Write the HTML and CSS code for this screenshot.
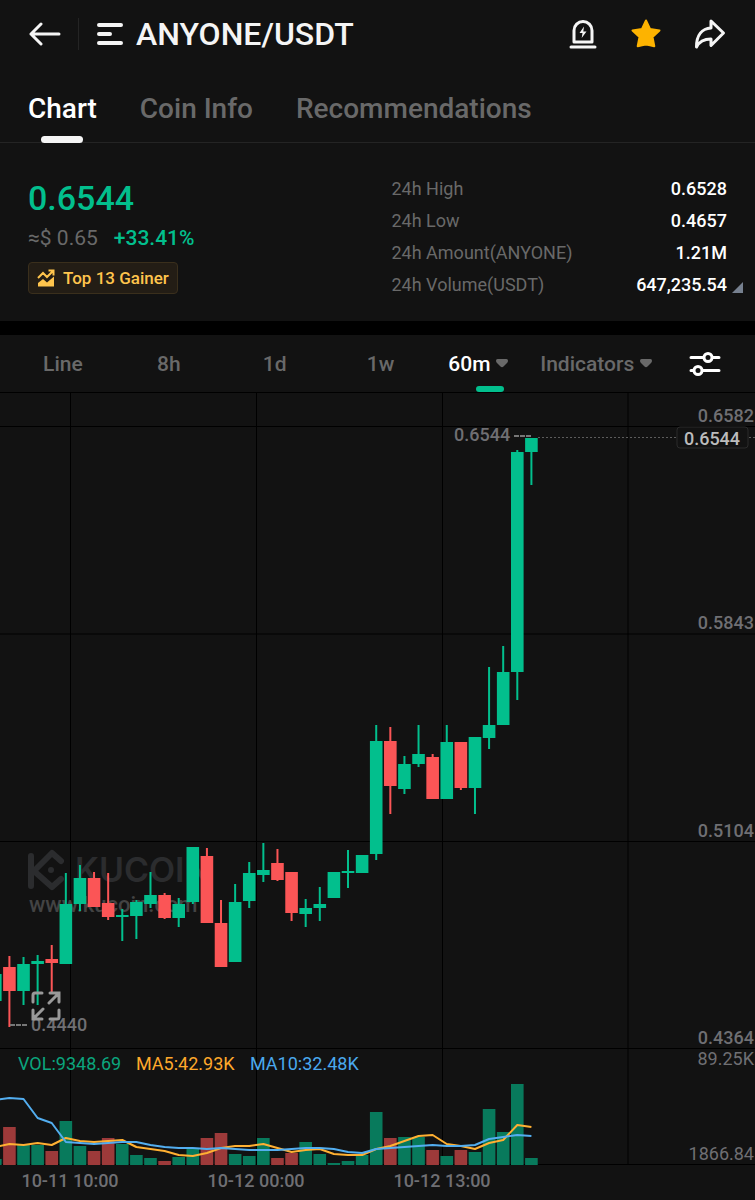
FILE: index.html
```
<!DOCTYPE html>
<html lang="en">
<head>
  <meta charset="UTF-8" />
  <meta name="viewport" content="width=device-width, initial-scale=1.0" />
  <title>ANYONE/USDT</title>
  <link rel="stylesheet" href="styles.css">
</head>
<body>
  <header class="topbar">
    <button class="icon-btn back" aria-label="Back">
      <svg width="32" height="24" viewBox="0 0 32 24"><path d="M30 12H2M12 2 2 12l10 10"/></svg>
    </button>
    <span class="divider"></span>
    <button class="pair">
      <svg width="28" height="24" viewBox="0 0 28 24"><path d="M3 3h22M3 12h11M3 21h22"/></svg>
      ANYONE/USDT
    </button>
    <div class="actions">
      <button class="icon-btn" aria-label="Price alert">
        <svg width="30" height="32" viewBox="0 0 30 32">
          <path class="line" d="M6 24V12.500a9 9 0 0 1 18 0V24zM3 29h24"/>
          <path class="solid" d="M16 8.500l-4.500 6.500h3l-.8 5 4.800-6.500h-3.200z"/>
        </svg>
      </button>
      <button class="icon-btn star" aria-label="Favourite">
        <svg width="32" height="32" viewBox="0 0 32 32"><path d="M16 2.500l4 8.500 9.500 1.400-7 6.600 1.800 9.300Q20 27 16 26.500 12 27 7.700 28.300L9.500 19l-7-6.600L12 11z"/></svg>
      </button>
      <button class="icon-btn" aria-label="Share">
        <svg width="32" height="32" viewBox="0 0 32 32"><path class="line" d="M17 3 29.500 15 17 27.500V21C10 21 5.500 23 2.500 29 2.500 17 8 10.500 17 10z"/></svg>
      </button>
    </div>
  </header>

  <nav class="tabs">
    <button class="tab active">Chart</button>
    <button class="tab">Coin Info</button>
    <button class="tab">Recommendations</button>
  </nav>

  <section class="summary">
    <div>
      <div class="price">0.6544</div>
      <div class="sub"><span>≈$ 0.65</span><span class="up">+33.41%</span></div>
      <a class="badge" href="#">
        <svg width="18" height="18" viewBox="0 0 18 18">
          <path class="line" d="M1 9l5-5 4 4 6-6M11.500 1.500H16.500V6.500"/>
          <path class="solid" d="M1 17.500v-3.500l5-4 4 3.500 7-6v10z"/>
        </svg>
        Top 13 Gainer
      </a>
    </div>
    <table class="stats">
      <tr><th>24h High</th><td>0.6528</td></tr>
      <tr><th>24h Low</th><td>0.4657</td></tr>
      <tr><th>24h Amount(ANYONE)</th><td>1.21M</td></tr>
      <tr><th>24h Volume(USDT)</th><td>647,235.54<span class="corner"></span></td></tr>
    </table>
  </section>

  <div class="periods">
    <button>Line</button>
    <button>8h</button>
    <button>1d</button>
    <button>1w</button>
    <button class="active">60m<svg class="caret" width="12" height="9" viewBox="0 0 12 9"><path d="M1.500 0h9Q12 0 12 1.500 12 3 11 4L7.500 7.500Q6 9 4.500 7.500L1 4Q0 3 0 1.500 0 0 1.500 0z"/></svg></button>
    <button>Indicators<svg class="caret" width="12" height="9" viewBox="0 0 12 9"><path d="M1.500 0h9Q12 0 12 1.500 12 3 11 4L7.500 7.500Q6 9 4.500 7.500L1 4Q0 3 0 1.500 0 0 1.500 0z"/></svg></button>
    <button class="settings" aria-label="Chart settings">
      <svg width="32" height="26" viewBox="0 0 32 26">
        <path d="M2 6.500h12.500M23.500 6.500H30M2 19.500h2.500M13.500 19.500H30"/>
        <circle cx="19" cy="6.500" r="4"/><circle cx="9" cy="19.500" r="4"/>
      </svg>
    </button>
  </div>

  <main class="chart">
    <svg class="plot" viewBox="0 392 755 808" role="img" aria-label="ANYONE/USDT 60 minute candles">
      <g id="grid"></g>
      <g class="watermark">
        <path d="M31 856v30M61 861l-9-8-18 18 18 16 9-8"/>
        <circle cx="51" cy="870" r="3"/>
        <text class="brand" x="75" y="882">KUCOIN</text>
        <text class="site" x="29" y="912">www.kucoin.com</text>
      </g>
      <g id="volume"></g>
      <g id="candles"></g>
      <g id="averages"></g>

      <path class="marker" d="M514 436h17M10 1025h17"/>
      <path class="last-line" d="M538 437.500H677M749 437.500h6"/>
      <g class="label">
        <text x="454" y="441">0.6544</text>
        <text x="31" y="1031">0.4440</text>
        <text class="end" x="754" y="422">0.6582</text>
        <text class="end" x="754" y="629">0.5843</text>
        <text class="end" x="754" y="837">0.5104</text>
        <text class="end" x="754" y="1044">0.4364</text>
        <text class="end thin" x="754" y="1065">89.25K</text>
        <text class="end thin" x="754" y="1160">1866.84</text>
        <text class="mid" x="70" y="1187">10-11 10:00</text>
        <text class="mid" x="256" y="1187">10-12 00:00</text>
        <text class="mid" x="442" y="1187">10-12 13:00</text>
      </g>
      <rect class="last-box" x="677" y="427" width="71" height="21" rx="3"/>
      <text class="last-text" x="712" y="445">0.6544</text>
      <text class="vol" x="18" y="1070">VOL:9348.69</text>
      <text class="ma5" x="136" y="1070">MA5:42.93K</text>
      <text class="ma10" x="250" y="1070">MA10:32.48K</text>
    </svg>
    <button class="expand" aria-label="Full screen">
      <svg width="30" height="30" viewBox="0 0 30 30"><path d="M2 11V4Q2 2 4 2h7M19 2h9v9M28 2 18 12M2 19v9h9M2 28l10-10M28 19v7q0 2-2 2h-7"/></svg>
    </button>
  </main>
  <script src="chart.js"></script>
</body>
</html>
```
FILE: styles.css
```
:root {
  --bg: #121212;
  --green: #02bf8d;
  --red: #fb5556;
  --muted: #696969;
  --label: #6f6f73;
  --gold: #ffc54d;
  --line: #242424;
}
* {
  box-sizing: border-box;
}
body {
  margin: 0;
  background: var(--bg);
  color: #fff;
  font-family: Roboto, "Liberation Sans", sans-serif;
}
button {
  padding: 0;
  border: none;
  background: none;
  color: inherit;
  font: inherit;
  cursor: pointer;
}
svg {
  display: block;
}
.topbar {
  display: flex;
  align-items: center;
  height: 67px;
  padding: 0 29px;
}
.topbar svg {
  fill: none;
  stroke: #f5f5f5;
  stroke-width: 3;
  stroke-linecap: round;
  stroke-linejoin: round;
}
.divider {
  width: 1px;
  height: 32px;
  margin: 0 17px;
  background: var(--line);
}
.pair {
  display: flex;
  align-items: center;
  gap: 12px;
  color: #f5f5f5;
  font-size: 32px;
  font-weight: 500;
}
.topbar .pair svg {
  stroke-width: 4;
}
.actions {
  display: flex;
  gap: 32px;
  margin-left: auto;
}
.topbar .solid {
  fill: #f5f5f5;
  stroke: none;
}
.topbar .star svg {
  fill: #fdb300;
  stroke: #fdb300;
  stroke-width: 2;
}

.tabs {
  display: flex;
  gap: 43px;
  height: 76px;
  padding: 0 28px;
  border-bottom: 1px solid var(--line);
}
.tab {
  position: relative;
  padding: 18px 0 10px;
  color: var(--muted);
  font-size: 28px;
  font-weight: 500;
}
.tab.active {
  color: #fff;
}
.tab.active::after {
  content: "";
  position: absolute;
  left: 50%;
  bottom: -1px;
  width: 42px;
  height: 7px;
  margin-left: -21px;
  border-radius: 4px;
  background: #f5f5f5;
}

.summary {
  display: flex;
  justify-content: space-between;
  padding: 29px 28px 21px;
  border-bottom: 14px solid #000;
}
.price {
  color: var(--green);
  font-size: 34px;
  font-weight: 500;
  line-height: 52px;
}
.sub {
  display: flex;
  gap: 16px;
  margin-bottom: 10px;
  color: var(--muted);
  font-size: 21px;
  line-height: 28px;
}
.up {
  color: var(--green);
  font-weight: 500;
}
.badge {
  display: inline-flex;
  align-items: center;
  gap: 8px;
  height: 32px;
  padding: 0 8px;
  border: 1px solid #3a2f1c;
  border-radius: 4px;
  background: #231d15;
  color: var(--gold);
  font-size: 17px;
  font-weight: 500;
  text-decoration: none;
}
.badge .line {
  fill: none;
  stroke: var(--gold);
  stroke-width: 2;
}
.badge .solid {
  fill: var(--gold);
}
.stats {
  width: 48%;
  height: 128px;
  border-collapse: collapse;
  font-size: 18px;
}
.stats th,
.stats td {
  position: relative;
  height: 32px;
  padding: 0;
}
.stats th {
  color: var(--muted);
  font-weight: 400;
  text-align: left;
}
.stats td {
  font-weight: 500;
  text-align: right;
}
.corner {
  position: absolute;
  right: -16px;
  bottom: 7px;
  border-left: 11px solid transparent;
  border-bottom: 11px solid #76808f;
}

.periods {
  display: grid;
  grid-template-columns: 106fr 106fr 106fr 106fr 90fr 146fr 72fr;
  height: 57px;
  padding: 0 14px 0 10px;
  color: var(--muted);
  font-size: 21px;
  font-weight: 500;
}
.periods button {
  position: relative;
  display: flex;
  align-items: center;
  justify-content: center;
  gap: 6px;
}
.periods .active {
  color: #fff;
}
.periods .active::after {
  content: "";
  position: absolute;
  right: 19px;
  bottom: 0;
  width: 28px;
  height: 6px;
  border-radius: 3px;
  background: var(--green);
}
.caret {
  flex: none;
  fill: var(--muted);
}
.settings svg {
  fill: none;
  stroke: #fff;
  stroke-width: 3;
  stroke-linecap: round;
}

.chart {
  position: relative;
}
.plot {
  width: 100%;
  height: auto;
  font-size: 18px;
}
#grid path {
  stroke: #000;
}
.watermark {
  fill: #2b2c2e;
}
.watermark path {
  fill: none;
  stroke: #2b2c2e;
  stroke-width: 6;
  stroke-linecap: round;
  stroke-linejoin: round;
}
.brand {
  font-family: Inter, sans-serif;
  font-size: 34px;
  font-weight: 600;
}
.site {
  fill: #434343;
  font-size: 22px;
  font-weight: 500;
}
.green {
  fill: var(--green);
}
.red {
  fill: var(--red);
}
#volume .green {
  fill: #087a5c;
}
#volume .red {
  fill: #9d3a3a;
}
#averages polyline {
  fill: none;
  stroke-width: 2;
  stroke-linejoin: round;
}
.ma5-line {
  stroke: #ffb032;
}
.ma10-line {
  stroke: #53aef0;
}
.marker {
  stroke: #777;
  stroke-width: 2;
  stroke-dasharray: 5 1;
}
.last-line {
  stroke: #5c5c5c;
  stroke-dasharray: 2 2;
}
.label {
  fill: var(--label);
  font-weight: 500;
}
.thin {
  font-weight: 400;
}
.end {
  text-anchor: end;
}
.mid {
  text-anchor: middle;
}
.last-box {
  fill: var(--bg);
  stroke: #2b2b2b;
}
.last-text {
  fill: #bcbcbc;
  font-weight: 500;
  text-anchor: middle;
}
.vol {
  fill: #0ba57d;
}
.ma5 {
  fill: #ffa92b;
}
.ma10 {
  fill: #4aa9ee;
}
.expand {
  position: absolute;
  left: 31px;
  bottom: 179px;
}
.expand path {
  fill: none;
  stroke: #999;
  stroke-width: 3;
  stroke-linecap: round;
}
```
FILE: chart.js
```
const STEP = 14.108;
const FIRST_X = -4.7;
const BODY = 12.6;
const VOLUME_BASE = 1165;

// [up, body top, body bottom, high, low, volume top]
const candles = [
  [1, 974, 1001, 974, 1001, 1159],
  [0, 967, 991, 956, 1027, 1127],
  [1, 964, 991, 957, 1005, 1145],
  [1, 961, 964, 955, 1005, 1145],
  [0, 959, 963, 945, 992, 1151],
  [1, 904, 964, 873, 964, 1121],
  [1, 878, 904, 865, 911, 1146],
  [0, 878, 907, 872, 907, 1151],
  [0, 903, 917, 873, 920, 1138],
  [1, 915, 917, 909, 941, 1144],
  [1, 902, 916, 900, 939, 1155],
  [1, 895, 904, 872, 908, 1158],
  [0, 895, 918, 893, 919, 1161],
  [1, 904, 918, 898, 927, 1157],
  [1, 847, 902, 847, 904, 1149],
  [0, 856, 923, 848, 923, 1138],
  [0, 923, 967, 900, 967, 1133],
  [1, 902, 962, 884, 962, 1154],
  [1, 873, 901, 862, 908, 1156],
  [1, 870, 875, 843, 882, 1138],
  [0, 863, 880, 849, 881, 1158],
  [0, 872, 913, 872, 921, 1153],
  [1, 908, 914, 899, 927, 1142],
  [1, 904, 908, 887, 921, 1154],
  [1, 872, 898, 872, 898, 1163],
  [1, 871, 873, 850, 888, 1161],
  [1, 855, 873, 855, 873, 1155],
  [1, 741, 854, 725, 860, 1112],
  [0, 741, 786, 727, 814, 1138],
  [1, 764, 789, 756, 794, 1137],
  [1, 754, 764, 725, 767, 1137],
  [0, 757, 799, 754, 799, 1150],
  [1, 742, 799, 725, 799, 1156],
  [0, 742, 788, 742, 790, 1150],
  [1, 737, 788, 737, 814, 1152],
  [1, 725, 738, 667, 749, 1109],
  [1, 672, 725, 646, 725, 1132],
  [1, 452, 672, 450, 700, 1084],
  [1, 438, 452, 438, 485, 1158]
];

const ma5 = [1147, 1144, 1145, 1143, 1145, 1138, 1141, 1142, 1141, 1140, 1147, 1149, 1151, 1155, 1156, 1153, 1148, 1146, 1146, 1144, 1148, 1152, 1150, 1149, 1154, 1155, 1155, 1149, 1146, 1141, 1136, 1135, 1144, 1146, 1149, 1143, 1140, 1125, 1127];
const ma10 = [1100, 1098, 1099, 1118, 1123, 1142, 1143, 1144, 1143, 1142, 1142, 1145, 1147, 1148, 1148, 1149, 1148, 1149, 1150, 1150, 1150, 1149, 1148, 1148, 1149, 1152, 1153, 1149, 1148, 1147, 1146, 1145, 1146, 1146, 1145, 1139, 1137, 1135, 1136];

function add(parent, name, attrs) {
  const el = document.createElementNS('http://www.w3.org/2000/svg', name);
  for (const key in attrs) el.setAttribute(key, attrs[key]);
  document.getElementById(parent).appendChild(el);
}

function bar(parent, color, x, width, top, bottom) {
  add(parent, 'rect', { class: color, x: x - width / 2, y: top, width: width, height: Math.max(bottom - top, 1) });
}

[392.5, 426.5, 634, 841.5, 1048.5, 1164.5].forEach(y => add('grid', 'path', { d: `M0 ${y}H755` }));
[70.5, 256.5, 442.5, 628].forEach(x => add('grid', 'path', { d: `M${x} 392V1165` }));

candles.forEach(([up, top, bottom, high, low, volume], i) => {
  const x = FIRST_X + i * STEP;
  const color = up ? 'green' : 'red';
  bar('volume', color, x, BODY, volume, VOLUME_BASE);
  bar('candles', color, x, 2, high, low);
  bar('candles', color, x, BODY, top, bottom);
});

function line(values, name) {
  const points = values.map((y, i) => `${FIRST_X + i * STEP},${y}`).join(' ');
  add('averages', 'polyline', { class: name, points: points });
}
line(ma5, 'ma5-line');
line(ma10, 'ma10-line');
```
